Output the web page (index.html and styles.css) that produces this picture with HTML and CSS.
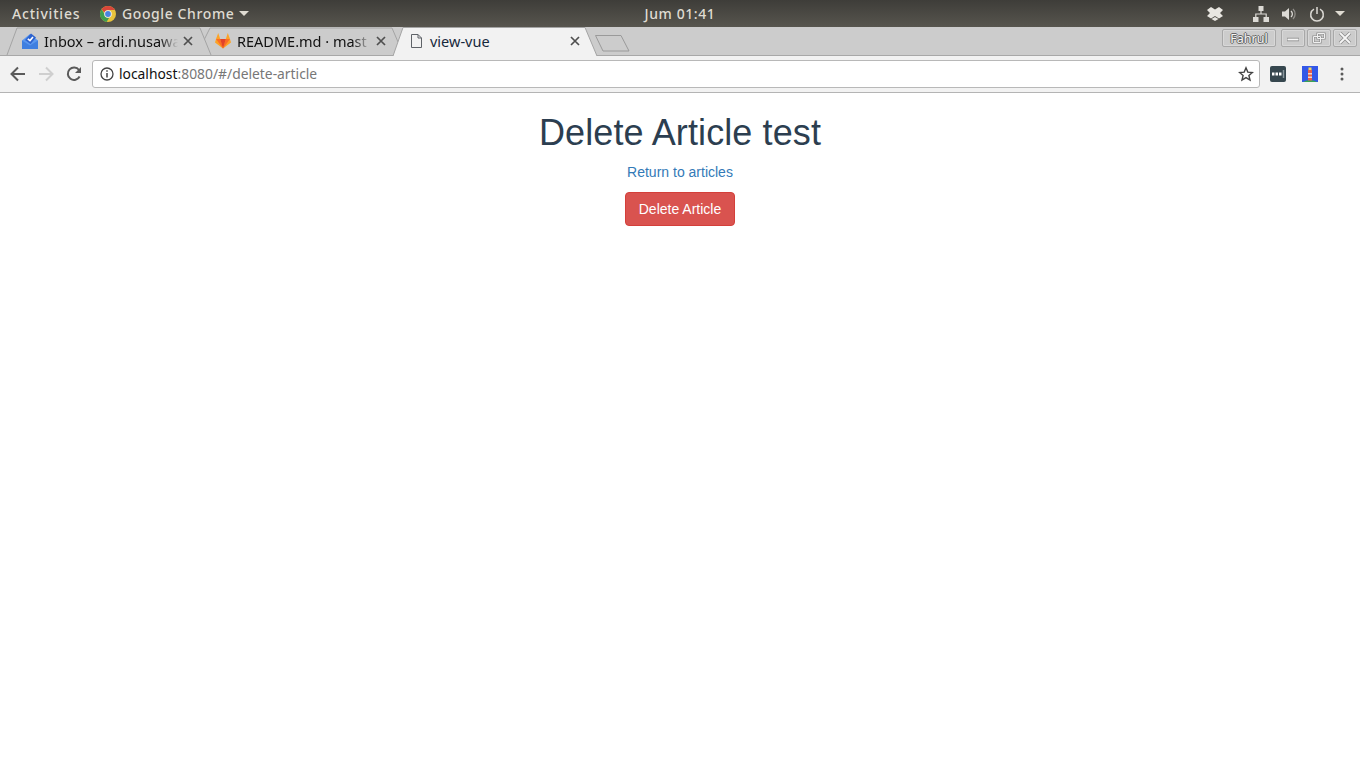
FILE: index.html
```html
<!DOCTYPE html>
<html lang="en">
<head>
<meta charset="utf-8">
<title>view-vue</title>
<link rel="stylesheet" href="styles.css">
</head>
<body>
<header class="panel">
  <div class="panel-left">
    <span class="activities">Activities</span>
    <span class="app">
      <svg class="chrome-logo" width="16" height="16" viewBox="0 0 16 16"><circle cx="8" cy="8" r="8" fill="#e8c33c"/><path d="M8 0a8 8 0 0 1 6.930 4H8a4 4 0 0 0-3.700 2.500L1.600 3.200A8 8 0 0 1 8 0z" fill="#d8463a"/><path d="M1.600 3.200l3.200 5.300A4 4 0 0 0 9.200 11.800L6.500 15.900A8 8 0 0 1 1.600 3.200z" fill="#3f9d50"/><circle cx="8" cy="8" r="3.800" fill="#eef1f4"/><circle cx="8" cy="8" r="2.900" fill="#4a84e0"/></svg>
      <span>Google Chrome</span>
      <i class="caret"></i>
    </span>
  </div>
  <div class="clock">Jum 01:41</div>
  <div class="panel-right">
    <svg class="dropbox" width="16" height="14" viewBox="0 0 16 14"><path d="M4 0l4 2.500L12 0l4 3-3 3 3 3-4 2.500-4-2.500L4 11.500 0 9l3-3-3-3z" fill="#e8e6e1"/><path d="M4.500 12l3.500-2 3.500 2-3.500 2z" fill="#e8e6e1"/></svg>
    <svg class="network" width="16" height="16" viewBox="0 0 16 16"><path d="M5.500 0h5v5h-5zM0 11h5.500v5H0zM10.500 11H16v5h-5.500z" fill="#dcdad5"/><path d="M8 5v3M2.800 11V8h10.400v3" fill="none" stroke="#dcdad5" stroke-width="1.200"/></svg>
    <svg class="volume" width="16" height="16" viewBox="0 0 16 16"><path d="M1 5.500h3L8 2v12l-4-3.500H1z" fill="#dcdad5"/><path d="M10 5a4 4 0 0 1 0 6" fill="none" stroke="#dcdad5" stroke-width="1.300"/><path d="M12 3a7 7 0 0 1 0 10" fill="none" stroke="#8f8d88" stroke-width="1.300"/></svg>
    <svg class="power" width="16" height="16" viewBox="0 0 16 16"><path d="M5 3.200a6.300 6.300 0 1 0 6 0" fill="none" stroke="#dcdad5" stroke-width="1.500"/><path d="M8 1v7" stroke="#dcdad5" stroke-width="1.500"/></svg>
    <i class="caret"></i>
  </div>
</header>

<div class="tabstrip">
  <svg class="tab-shapes" width="640" height="29" viewBox="0 0 640 29">
    <path d="M203 15L210 1H392L398 15" fill="#cccccc" stroke="#a4a4a4"/>
    <path d="M7 28L17 1H200L211 28" fill="#cccccc" stroke="#a4a4a4"/>
    <path d="M393 29L403 0.500H585L597 29" fill="#f2f2f2" stroke="#a4a4a4"/>
    <path d="M595.500 8.500H621L629 24H603z" fill="#cccccc" stroke="#9a9a9a" stroke-linejoin="round"/>
  </svg>
  <div class="tab tab-inbox">
    <svg class="tab-icon" width="16" height="16" viewBox="0 0 16 16"><path d="M0 7.500L8 1l8 6.500V16H0z" fill="#5a97ee"/><path d="M3 7l6-6.500L14 4.500 8.500 11z" fill="#2c62cf"/><path d="M5.800 5.800L8 7.600l3-3.600" fill="none" stroke="#fff" stroke-width="1.600"/><path d="M0 7.500L8 12.500l8-5V16H0z" fill="#3f7fe0"/></svg>
    <span class="tab-title tab-title-fade">Inbox – ardi.nusawa</span>
    <svg class="tab-close" width="10" height="10" viewBox="0 0 10 10"><path d="M1 1l8 8M9 1l-8 8" stroke="#4f4f4f" stroke-width="1.700"/></svg>
  </div>
  <div class="tab tab-readme">
    <svg class="tab-icon" width="16" height="16" viewBox="0 0 16 16"><path d="M8 15.500L0 9.500l1-3.500L3.200 0l2 6h5.600l2-6L15 6l1 3.500z" fill="#fca326"/><path d="M8 15.500L1 6h4.200zM8 15.500L15 6h-4.200z" fill="#fc6d26"/><path d="M8 15.500L5.200 6h5.600z" fill="#e24329"/></svg>
    <span class="tab-title tab-title-fade">README.md · mast</span>
    <svg class="tab-close" width="10" height="10" viewBox="0 0 10 10"><path d="M1 1l8 8M9 1l-8 8" stroke="#4f4f4f" stroke-width="1.700"/></svg>
  </div>
  <div class="tab tab-view">
    <svg class="tab-icon" width="12" height="14" viewBox="0 0 12 14"><path d="M.500.500h6.500l3.500 3.500v9.500H.500z M7 .500V4h3.500" fill="none" stroke="#5f6368"/></svg>
    <span class="tab-title">view-vue</span>
    <svg class="tab-close" width="10" height="10" viewBox="0 0 10 10"><path d="M1 1l8 8M9 1l-8 8" stroke="#4f4f4f" stroke-width="1.700"/></svg>
  </div>
  <div class="window-controls">
    <span class="profile">Fahrul</span>
    <span class="win-btn"><svg width="14" height="12" viewBox="0 0 14 12"><path d="M1 7.500h12" stroke="#8c8c8c" stroke-width="3.500"/><path d="M1.500 7.500h11" stroke="#f6f6f6" stroke-width="1.800"/></svg></span>
    <span class="win-btn"><svg width="14" height="12" viewBox="0 0 14 12"><path d="M5.500 1.500h7v5h-7zM1.500 4.500h7v6h-7z" fill="none" stroke="#8c8c8c" stroke-width="2.200"/><path d="M5.500 1.500h7v5h-7zM1.500 4.500h7v6h-7z" fill="none" stroke="#f0f0f0" stroke-width="1"/></svg></span>
    <span class="win-btn"><svg width="14" height="12" viewBox="0 0 14 12"><path d="M2 1l10 10M12 1L2 11" stroke="#8c8c8c" stroke-width="3.400"/><path d="M2 1l10 10M12 1L2 11" stroke="#f6f6f6" stroke-width="1.800"/></svg></span>
  </div>
</div>

<div class="toolbar">
  <svg class="nav" width="16" height="16" viewBox="0 0 16 16"><path d="M15 8H2M8 1.500L1.500 8 8 14.500" fill="none" stroke="#5a5a5a" stroke-width="2"/></svg>
  <svg class="nav" width="16" height="16" viewBox="0 0 16 16"><path d="M1 8h13M8 1.500L14.500 8 8 14.500" fill="none" stroke="#cfcfcf" stroke-width="2"/></svg>
  <svg class="nav" width="16" height="16" viewBox="0 0 16 16"><path d="M13.600 10.500A6.200 6.200 0 1 1 13 4" fill="none" stroke="#5a5a5a" stroke-width="2"/><path d="M15 1v6H9z" fill="#5a5a5a"/></svg>
  <div class="omnibox">
    <svg class="info" width="14" height="14" viewBox="0 0 14 14"><circle cx="7" cy="7" r="6" fill="none" stroke="#444" stroke-width="1.300"/><path d="M7 6v4.500" stroke="#444" stroke-width="1.500"/><path d="M7 3.200v1.600" stroke="#444" stroke-width="1.500"/></svg>
    <span class="url"><span class="host">localhost</span>:8080/#/delete-article</span>
    <svg class="star" width="16" height="16" viewBox="0 0 16 16"><path d="M8 1.800l1.800 4.300 4.600.4-3.500 3 1.100 4.500L8 11.600 4 14l1.100-4.500-3.500-3 4.600-.4z" fill="none" stroke="#444" stroke-width="1.400"/></svg>
  </div>
  <svg class="ext-dots" width="16" height="16" viewBox="0 0 16 16"><rect width="16" height="16" rx="2" fill="#36474f"/><path d="M2 6.500h2.500v3H2zM5.500 6.500H8v3H5.500zM9 6.500h2.500v3H9z" fill="#fff"/><path d="M13.500 4v8" stroke="#8a979d" stroke-width="1.500"/></svg>
  <svg class="ext-light" width="16" height="16" viewBox="0 0 16 16"><rect width="16" height="16" fill="#3358e8"/><path d="M1 16q7-4 14 0z" fill="#3aa457"/><rect x="6" y="4" width="4" height="10.500" fill="#e8604c"/><rect x="6" y="7" width="4" height="1.500" fill="#f4d7c8"/><rect x="6" y="10.500" width="4" height="1.500" fill="#f4d7c8"/><rect x="6.500" y="1.500" width="3" height="2.500" fill="#f6d860"/></svg>
  <svg class="menu" width="4" height="14" viewBox="0 0 4 14"><circle cx="2" cy="2" r="1.500" fill="#5a5a5a"/><circle cx="2" cy="7" r="1.500" fill="#5a5a5a"/><circle cx="2" cy="12" r="1.500" fill="#5a5a5a"/></svg>
</div>

<main class="page">
  <h1 class="title">Delete Article test</h1>
  <p class="return"><a class="return-link" href="#">Return to articles</a></p>
  <button class="btn-danger" type="button">Delete Article</button>
</main>
</body>
</html>
```
FILE: styles.css
```css
* { box-sizing: border-box; }
html, body { margin: 0; height: 100%; overflow: hidden; background: #fff; }
body { font-family: "Liberation Sans", Arial, sans-serif; }

.panel {
  height: 27px;
  display: grid;
  grid-template-columns: 1fr auto 1fr;
  align-items: center;
  background: linear-gradient(#3e3d39, #57554e);
  color: #dfdbd2;
  font: 500 14px "Noto Sans", sans-serif;
  letter-spacing: .6px;
}
.panel-left { display: flex; align-items: center; padding-left: 12px; }
.activities { width: 88px; letter-spacing: .8px; }
.app { display: flex; align-items: center; gap: 6px; }
.chrome-logo { flex: none; }
.caret {
  width: 0; height: 0; flex: none;
  border-left: 5px solid transparent;
  border-right: 5px solid transparent;
  border-top: 5px solid #dfdbd2;
}
.app .caret { margin-left: -1px; }
.clock { font-size: 14px; }
.panel-right { display: flex; align-items: center; justify-content: flex-end; padding-right: 15px; }
.dropbox { margin-right: 30px; }
.network { margin-right: 12px; }
.volume { margin-right: 12px; }
.power { margin-right: 10px; }

.tabstrip {
  position: relative;
  height: 29px;
  display: flex;
  align-items: center;
  background: #cccccc;
  border-bottom: 1px solid #a8a8a8;
  font: 14.500px "Noto Sans", sans-serif;
  color: #111;
}
.tab-shapes { position: absolute; left: 0; top: 0; }
.tab { position: relative; display: flex; align-items: center; height: 28px; flex: none; }
.tab-inbox { width: 193px; padding-left: 22px; }
.tab-readme { width: 193px; padding-left: 22px; }
.tab-view { width: 194px; padding-left: 25px; }
.tab-icon { flex: none; margin-right: 6px; }
.tab-view .tab-icon { margin-right: 7px; }
.tab-title { flex: 1; min-width: 0; white-space: nowrap; }
.tab-title-fade {
  -webkit-mask-image: linear-gradient(to right, #000 116px, transparent 134px);
  mask-image: linear-gradient(to right, #000 116px, transparent 134px);
}
.tab-view .tab-title { color: #16283c; }
.tab-close { flex: none; }
.window-controls { position: absolute; right: 3px; top: 2px; display: flex; gap: 2px; }
.profile {
  width: 54px; height: 18px; margin-right: 3px;
  display: flex; align-items: center; justify-content: center;
  background: #cccccc;
  border: 1px solid #a8a8a8;
  border-radius: 2px;
  box-shadow: inset 0 0 0 1px #d8d8d8;
  font: 12.500px "Noto Sans", sans-serif;
  color: #f4f4f4;
  text-shadow: 1px 0 0 #666, -1px 0 0 #666, 0 1px 0 #666, 0 -1px 0 #666;
}
.win-btn {
  width: 24px; height: 18px;
  display: flex; align-items: center; justify-content: center;
  background: #cccccc;
  border: 1px solid #a8a8a8;
  border-radius: 2px;
  box-shadow: inset 0 0 0 1px #d8d8d8;
}

.toolbar {
  height: 37px;
  display: flex;
  align-items: center;
  padding: 0 10px 0 10px;
  background: #f2f2f2;
  border-bottom: 1px solid #b4b4b4;
}
.nav { flex: none; margin-right: 12px; }
.omnibox {
  flex: none;
  width: 1168px;
  height: 28px;
  margin-left: -2px;
  display: flex;
  align-items: center;
  padding: 0 5px 1px 7px;
  background: #fff;
  border: 1px solid #b8b8b8;
  border-radius: 3px;
  font: 13.850px "Noto Sans", sans-serif;
  color: #777;
}
.info { flex: none; margin-right: 5px; }
.url { flex: 1; white-space: nowrap; }
.host { color: #111; }
.star { flex: none; }
.ext-dots { flex: none; margin-left: 10px; }
.ext-light { flex: none; margin-left: 16px; }
.menu { flex: none; margin-left: 22px; }

.page { text-align: center; color: #333; font-size: 14px; line-height: 20px; }
.title {
  margin: 20px 0 10px;
  font-size: 36px;
  font-weight: 500;
  line-height: 39px;
  letter-spacing: .1px;
  color: #2c3e50;
}
.return { margin: 0 0 10px; }
.return-link { color: #337ab7; text-decoration: none; }
.btn-danger {
  padding: 6px 13px;
  font: 14px/20px "Liberation Sans", Arial, sans-serif;
  color: #fff;
  background: #d9534f;
  border: 1px solid #d43f3a;
  border-radius: 4px;
}
```
